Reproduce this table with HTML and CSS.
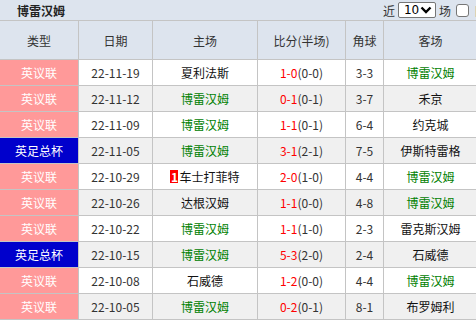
FILE: index.html
```html
<!DOCTYPE html>
<html lang="zh">
<head>
<meta charset="utf-8">
<link rel="stylesheet" href="styles.css">
</head>
<body>
<div class="page">
  <div class="titlebar">
    <span class="title">博雷汉姆</span>
    <div class="filter">
      <span>近</span>
      <span class="sel"><span class="selval">10</span><svg width="12" height="8" viewBox="0 0 12 8"><path d="M1.5 1.5 L6 6 L10.5 1.5" fill="none" stroke="#000" stroke-width="2.4"/></svg></span>
      <span>场</span>
      <span class="chk"></span>
      <span class="same">同主场</span>
    </div>
  </div>
  <table class="tbl">
    <colgroup>
      <col class="c1"><col class="c2"><col class="c3"><col class="c4"><col class="c5"><col class="c6">
    </colgroup>
    <thead>
      <tr><th>类型</th><th>日期</th><th>主场</th><th>比分(半场)</th><th>角球</th><th>客场</th></tr>
    </thead>
    <tbody>
      <tr><td class="lg pink">英议联</td><td>22-11-19</td><td>夏利法斯</td><td><span class="r">1-0</span>(0-0)</td><td>3-3</td><td class="g">博雷汉姆</td></tr>
      <tr class="alt"><td class="lg pink">英议联</td><td>22-11-12</td><td class="g">博雷汉姆</td><td><span class="r">0-1</span>(0-1)</td><td>3-7</td><td>禾京</td></tr>
      <tr><td class="lg pink">英议联</td><td>22-11-09</td><td class="g">博雷汉姆</td><td><span class="r">1-1</span>(0-1)</td><td>6-4</td><td>约克城</td></tr>
      <tr class="alt"><td class="lg blue">英足总杯</td><td>22-11-05</td><td class="g">博雷汉姆</td><td><span class="r">3-1</span>(2-1)</td><td>7-5</td><td>伊斯特雷格</td></tr>
      <tr><td class="lg pink">英议联</td><td>22-10-29</td><td><span class="card">1</span>车士打菲特</td><td><span class="r">2-0</span>(1-0)</td><td>4-4</td><td class="g">博雷汉姆</td></tr>
      <tr class="alt"><td class="lg pink">英议联</td><td>22-10-26</td><td>达根汉姆</td><td><span class="r">1-1</span>(0-0)</td><td>4-8</td><td class="g">博雷汉姆</td></tr>
      <tr><td class="lg pink">英议联</td><td>22-10-22</td><td class="g">博雷汉姆</td><td><span class="r">1-1</span>(1-0)</td><td>2-3</td><td>雷克斯汉姆</td></tr>
      <tr class="alt"><td class="lg blue">英足总杯</td><td>22-10-15</td><td class="g">博雷汉姆</td><td><span class="r">5-3</span>(2-0)</td><td>2-4</td><td>石威德</td></tr>
      <tr><td class="lg pink">英议联</td><td>22-10-08</td><td>石威德</td><td><span class="r">1-2</span>(0-0)</td><td>4-4</td><td class="g">博雷汉姆</td></tr>
      <tr class="alt"><td class="lg pink">英议联</td><td>22-10-05</td><td class="g">博雷汉姆</td><td><span class="r">0-2</span>(0-1)</td><td>8-1</td><td>布罗姆利</td></tr>
    </tbody>
  </table>
</div>
</body>
</html>
```
FILE: styles.css
```css
html, body {
  margin: 0;
  padding: 0;
  background: #fff;
  overflow: hidden;
}
.page {
  width: 476px;
  height: 320px;
  overflow: hidden;
  font-family: "Noto Sans CJK SC", "Noto Sans", sans-serif;
  font-size: 12px;
  color: #333;
}
.titlebar {
  height: 20px;
  background: #dde4ee;
  display: flex;
  align-items: center;
  justify-content: space-between;
  white-space: nowrap;
}
.title {
  font-weight: bold;
  color: #222;
  padding-left: 17px;
  font-size: 12px;
}
.filter {
  display: flex;
  align-items: center;
  gap: 3px;
  margin-right: -35px;
  color: #333;
}
.sel {
  box-sizing: border-box;
  width: 38px;
  height: 16px;
  border: 1px solid #767676;
  border-radius: 2px;
  background: #fff;
  display: flex;
  align-items: center;
  justify-content: space-between;
  padding: 0 3px 0 5px;
  color: #000;
  font-family: "DejaVu Sans", sans-serif;
  font-size: 12px;
}
.chk {
  box-sizing: border-box;
  width: 13px;
  height: 13px;
  border: 1px solid #767676;
  border-radius: 3px;
  background: #fff;
  margin-left: 2px;
}
.same {
  margin-left: 3px;
}
.tbl {
  border-collapse: collapse;
  table-layout: fixed;
  width: 478px;
  margin-left: -1px;
}
.c1 { width: 79px; }
.c2 { width: 74px; }
.c3 { width: 105px; }
.c4 { width: 88px; }
.c5 { width: 38px; }
.c6 { width: 94px; }
.tbl th, .tbl td {
  border: 1px solid #c4c4c4;
  text-align: center;
  padding: 0;
  white-space: nowrap;
  overflow: hidden;
}
.tbl th {
  height: 38px;
  background: #dde4ee;
  font-weight: normal;
  color: #333;
}
.tbl td {
  height: 25px;
  background: #fff;
  color: #333;
}
.tbl tr.alt td {
  background: #f0f0f0;
}
.tbl td.lg {
  color: #fff;
}
.tbl td.pink, .tbl tr.alt td.pink {
  background: #ff9999;
}
.tbl td.blue, .tbl tr.alt td.blue {
  background: #0000cc;
}
.tbl td.g {
  color: #008000;
}
.r {
  color: #ff0000;
}
.card {
  display: inline-block;
  background: #ff0000;
  color: #fff;
  font-weight: bold;
  width: 8px;
  line-height: 13px;
  margin-right: 1px;
  vertical-align: 0;
}
.tbl td:nth-child(3):not(.g), .tbl td:nth-child(6):not(.g) {
  color: #111;
}
```
